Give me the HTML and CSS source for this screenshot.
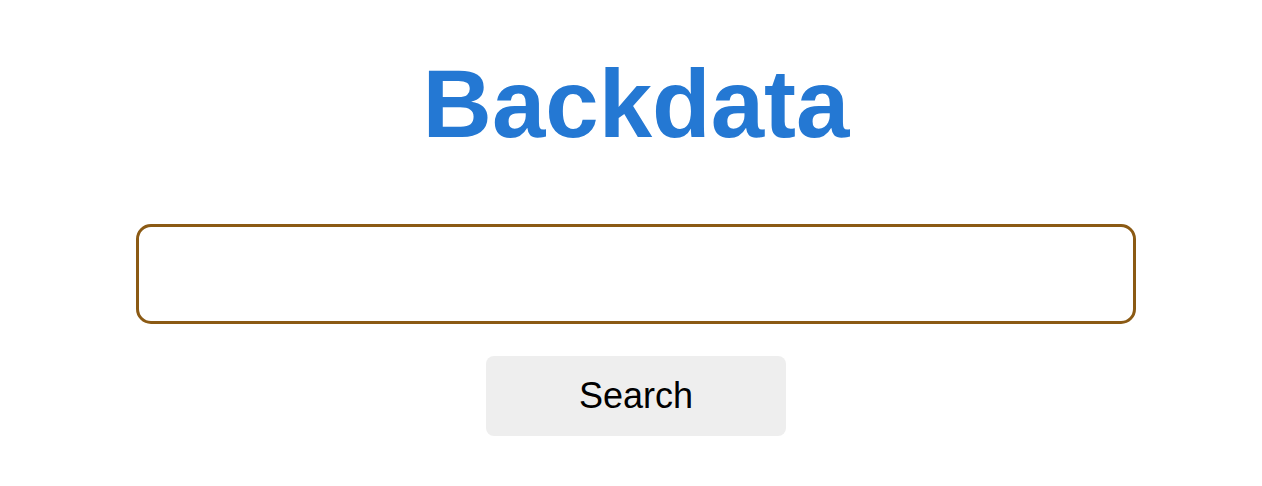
FILE: index.html
```html
<!DOCTYPE html>
<html lang="en">
<head>
<meta charset="utf-8">
<title>Backdata</title>
<link rel="stylesheet" href="styles.css">
</head>
<body>
<main class="page">
  <h1 class="title">Backdata</h1>
  <form class="search" onsubmit="return false">
    <input class="search-input" type="text" aria-label="Search">
    <button class="search-button" type="submit">Search</button>
  </form>
</main>
</body>
</html>
```
FILE: styles.css
```css
html, body {
  margin: 0;
  padding: 0;
  background: #ffffff;
}
body {
  font-family: "Liberation Sans", Arial, sans-serif;
}
.page {
  display: flex;
  flex-direction: column;
  align-items: center;
  padding-left: 10px;
  padding-top: 49px;
}
.title {
  margin: 0;
  font-size: 96px;
  font-weight: bold;
  line-height: normal;
  color: #2478d3;
}
.search {
  display: flex;
  flex-direction: column;
  align-items: center;
  margin-top: 65px;
  gap: 32px;
}
.search-input {
  box-sizing: border-box;
  width: 1000px;
  height: 100px;
  border: 3px solid #8b5a14;
  border-radius: 15px;
  padding: 0 20px;
  font-family: inherit;
  font-size: 36px;
  outline: none;
  background: #fff;
}
.search-button {
  box-sizing: border-box;
  width: 300px;
  height: 80px;
  border: none;
  border-radius: 8px;
  background: #eeeeee;
  color: #000;
  font-family: inherit;
  font-size: 36px;
  cursor: pointer;
}
```
